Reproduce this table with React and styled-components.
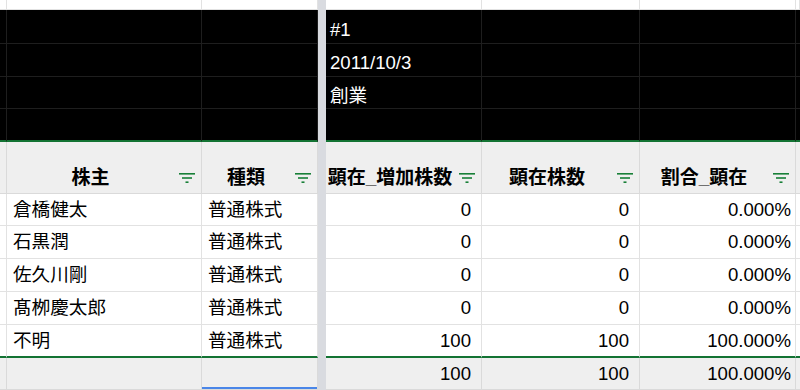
import React from "react";
import styled, { createGlobalStyle } from "styled-components";

const GlobalStyle = createGlobalStyle`
  html, body {
    margin: 0;
    padding: 0;
    background: #ffffff;
  }
  body {
    width: 800px;
    height: 390px;
    overflow: hidden;
    font-family: "Liberation Sans", "Noto Sans CJK JP", sans-serif;
  }
`;

const COLS = [
  { key: "rn", width: 7 },
  { key: "holder", width: 195, title: "株主", align: "flex-start", pr: 6 },
  { key: "kind", width: 116, title: "種類", align: "flex-start", pr: 6 },
  { key: "added", width: 156, title: "顕在_増加株数", align: "flex-end", pr: 10 },
  { key: "shares", width: 158, title: "顕在株数", align: "flex-end", pr: 10 },
  { key: "ratio", width: 156, title: "割合_顕在", align: "flex-end", pr: 4 },
  { key: "rest", width: 4 },
];

const TOP = [
  { h: 34, text: "#1" },
  { h: 33, text: "2011/10/3" },
  { h: 32, text: "創業" },
  { h: 33, text: "", green: true },
];

const DATA = [
  { holder: "倉橋健太", kind: "普通株式", added: "0", shares: "0", ratio: "0.000%", h: 32 },
  { holder: "石黒潤", kind: "普通株式", added: "0", shares: "0", ratio: "0.000%", h: 33 },
  { holder: "佐久川剛", kind: "普通株式", added: "0", shares: "0", ratio: "0.000%", h: 33 },
  { holder: "髙栁慶太郎", kind: "普通株式", added: "0", shares: "0", ratio: "0.000%", h: 33 },
  { holder: "不明", kind: "普通株式", added: "100", shares: "100", ratio: "100.000%", h: 33, green: true },
];

const TOTAL = { added: "100", shares: "100", ratio: "100.000%" };

const palette = {
  top: { bg: "#ffffff", line: "#e2e2e2", color: "#000" },
  black: { bg: "#000000", line: "#1e1e1e", color: "#ffffff" },
  head: { bg: "#efefef", line: "#dadada", color: "#000" },
  data: { bg: "#ffffff", line: "#e2e2e2", color: "#000" },
  foot: { bg: "#efefef", line: "#dadada", color: "#000" },
};

// per-variant padding: [top, right, bottom, left] (right = null -> column value)
const pads = {
  top: [0, 0, 0, 0],
  black: [6, 0, 0, 4],
  head: [0, 5, 4, 0],
  data: [0, null, 0, 6],
  foot: [0, null, 0, 6],
};

function Sheet() {
  const renderRow = (variant, height, green, renderCell, rowKey) => {
    const cells = [];
    COLS.forEach((col, i) => {
      const plain = variant === "black" || variant === "head" || variant === "top";
      const p = pads[variant];
      cells.push(
        <Cell
          key={col.key}
          $w={col.width}
          $v={variant}
          $green={green}
          $align={plain ? "flex-start" : col.align}
          $valign={variant === "head" ? "flex-end" : "center"}
          $pad={`${p[0]}px ${p[1] === null ? col.pr || 0 : p[1]}px ${p[2]}px ${p[3]}px`}
          $selected={variant === "foot" && col.key === "kind"}
        >
          {renderCell(col)}
        </Cell>
      );
      if (i === 2) cells.push(<Freeze key="freeze" />);
    });
    return (
      <Row key={rowKey} $h={height}>
        {cells}
      </Row>
    );
  };

  return (
    <Grid>
      {renderRow("top", 10, false, () => null, "top")}
      {TOP.map((r, idx) =>
        renderRow("black", r.h, r.green, (col) => (col.key === "added" ? r.text : null), "b" + idx)
      )}
      {renderRow(
        "head",
        52,
        false,
        (col) =>
          col.title ? (
            <HeadInner>
              <HeadTitle>{col.title}</HeadTitle>
              <FilterIcon />
            </HeadInner>
          ) : null,
        "head"
      )}
      {DATA.map((r, idx) => renderRow("data", r.h, r.green, (col) => r[col.key] || null, "d" + idx))}
      {renderRow("foot", 32, false, (col) => TOTAL[col.key] || null, "foot")}
    </Grid>
  );
}

function FilterIcon() {
  return (
    <Filter width="18" height="12" viewBox="0 0 18 12">
      <rect x="1" y="1" width="16" height="1.6" fill="#188038" />
      <rect x="4" y="5.2" width="10" height="1.6" fill="#188038" />
      <rect x="7.5" y="9.4" width="3" height="1.6" fill="#188038" />
    </Filter>
  );
}

export default function App() {
  return (
    <>
      <GlobalStyle />
      <Sheet />
    </>
  );
}

const Grid = styled.div`
  display: flex;
  flex-direction: column;
  width: 800px;
  height: 390px;
  overflow: hidden;
`;

const Row = styled.div`
  display: flex;
  height: ${({ $h }) => $h}px;
  flex: none;
`;

const Cell = styled.div`
  box-sizing: border-box;
  flex: none;
  width: ${({ $w }) => $w}px;
  height: 100%;
  display: flex;
  align-items: ${({ $valign }) => $valign};
  justify-content: ${({ $align }) => $align || "flex-start"};
  padding: ${({ $pad }) => $pad};
  background: ${({ $v }) => palette[$v].bg};
  color: ${({ $v }) => palette[$v].color};
  border-right: 1px solid ${({ $v }) => palette[$v].line};
  border-bottom: ${({ $green, $v }) => ($green ? "2px solid #137333" : `1px solid ${palette[$v].line}`)};
  box-shadow: ${({ $selected }) => ($selected ? "inset 0 -2px 0 #4a86e8" : "none")};
  font-size: 18.6px;
  line-height: 22px;
  white-space: nowrap;
  overflow: hidden;
`;

const Freeze = styled.div`
  flex: none;
  width: 8px;
  height: 100%;
  background: #d9dbe0;
`;

const HeadInner = styled.div`
  display: flex;
  align-items: center;
  width: 100%;
`;

const HeadTitle = styled.span`
  flex: 1;
  min-width: 0;
  text-align: center;
  font-size: 19px;
  font-weight: 700;
  color: #000;
`;

const Filter = styled.svg`
  flex: none;
  display: block;
  margin-left: 4px;
`;
